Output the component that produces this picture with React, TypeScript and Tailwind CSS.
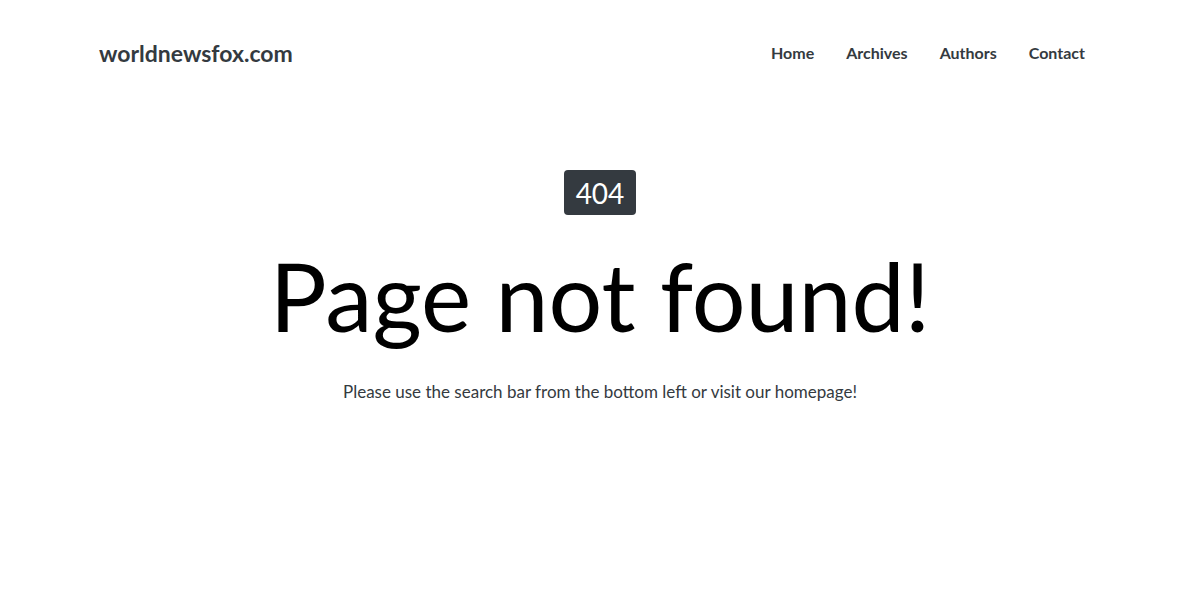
export default function App() {
  const links = ["Home", "Archives", "Authors", "Contact"];
  return (
    <div className="min-h-[600px] w-full bg-white text-[#343a40]" style={{ fontFamily: "Lato, 'Open Sans', sans-serif" }}>
      <header className="flex h-[106px] items-center justify-between pl-[99px] pr-[115px]">
        <a className="text-[23px] font-bold leading-none text-[#343a40]">worldnewsfox.com</a>
        <nav className="flex items-center gap-[32px]">
          {links.map((l) => (
            <a key={l} className="text-[16px] font-bold leading-none text-[#343a40]">
              {l}
            </a>
          ))}
        </nav>
      </header>
      <main className="flex flex-col items-center">
        <div className="mt-[64px] flex h-[45px] w-[72px] items-center justify-center rounded-[4px] bg-[#343a40] text-[28px] leading-none text-white">
          404
        </div>
        <h1 className="mt-[33px] text-[95px] font-normal leading-none text-black">Page not found!</h1>
        <p className="mt-[37px] text-[17px] leading-[24px] text-[#343a40]">
          Please use the search bar from the bottom left or visit our homepage!
        </p>
      </main>
    </div>
  );
}
